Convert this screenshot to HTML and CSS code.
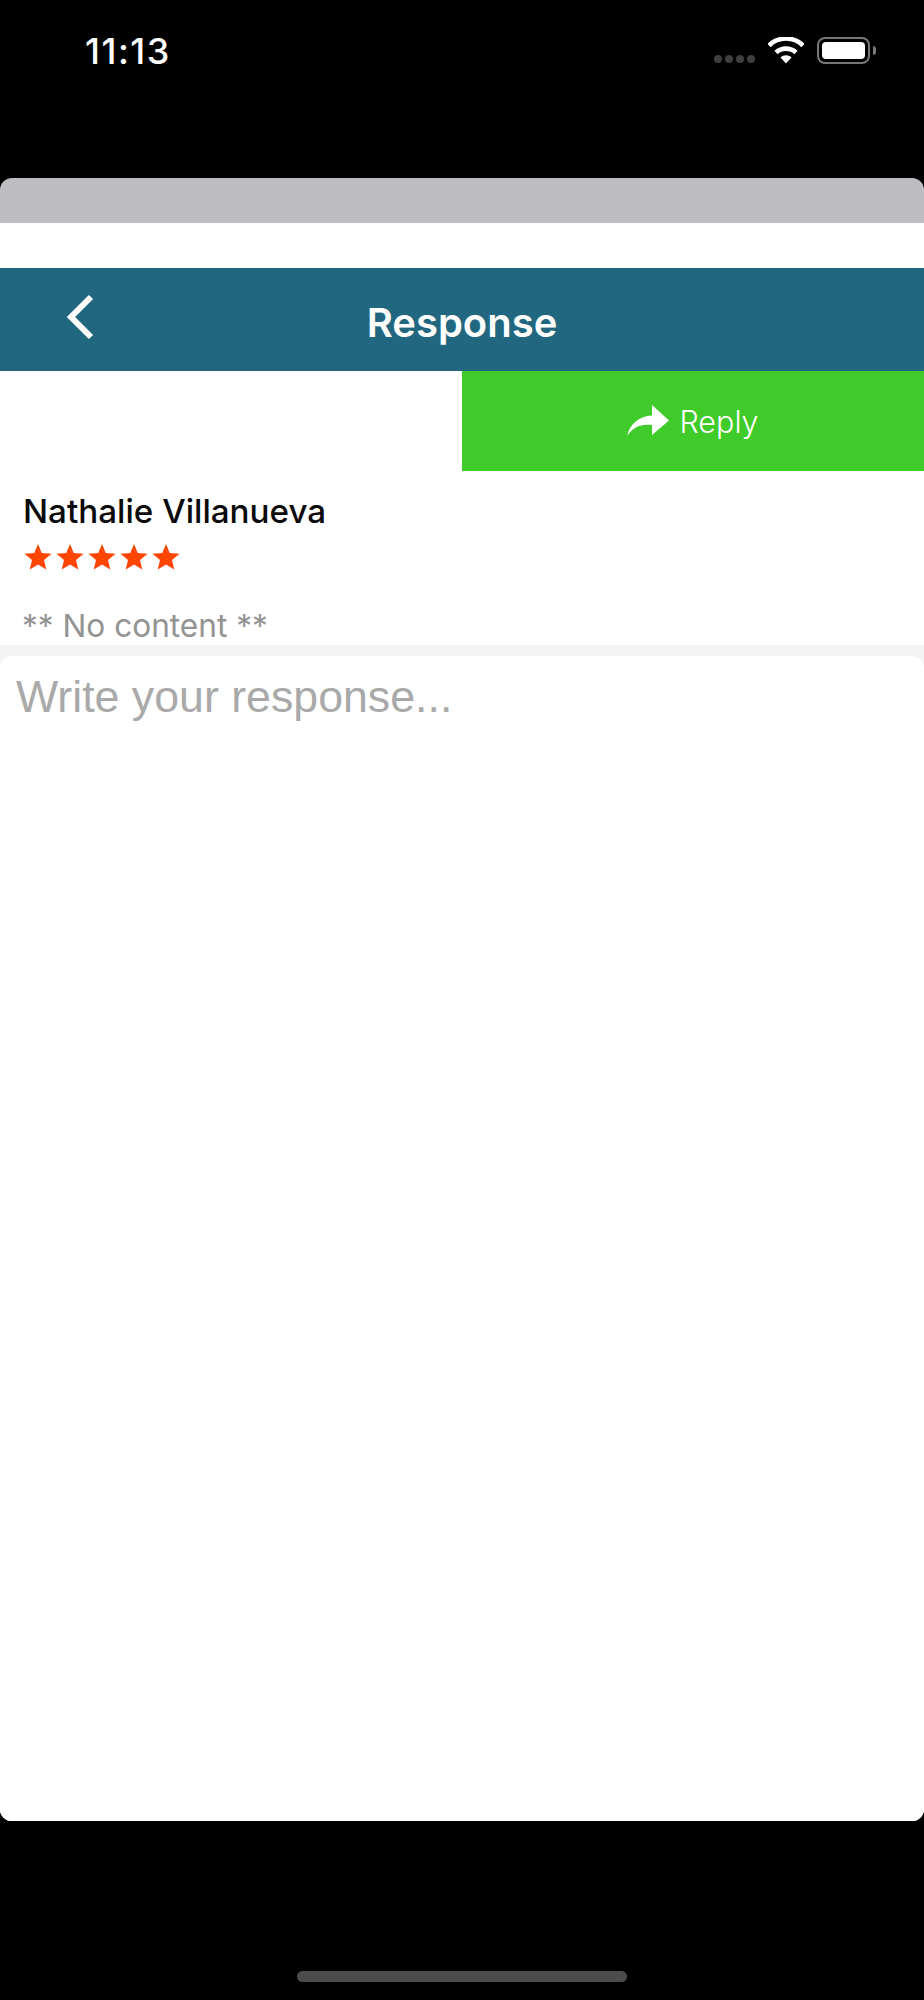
FILE: index.html
```html
<!DOCTYPE html>
<html lang="en">
<head>
    <meta charset="UTF-8">
    <meta name="viewport" content="width=device-width, initial-scale=1.0">
    <title>Response</title>
    <link rel="stylesheet" href="styles.css">
</head>
<body>

    <!-- Status bar -->
    <div class="status-bar">
        <span class="time">11:13</span>
        <div class="status-icons">
            <div class="signal"><i></i><i></i><i></i><i></i></div>
            <svg class="wifi" width="36" height="27" viewBox="0 0 36 27">
                <path d="M1 8.500C10.500 -0.800 25.500 -0.800 35 8.500" fill="none" stroke="#fff" stroke-width="4.600"/>
                <path d="M8 15.500C13.500 10.300 22.500 10.300 28 15.500" fill="none" stroke="#fff" stroke-width="4.600"/>
                <path d="M12.500 20.500C15.500 17.500 20.500 17.500 23.500 20.500L18 26.500Z" fill="#fff"/>
            </svg>
            <div class="battery"><div class="battery-fill"></div></div>
            <div class="battery-cap"></div>
        </div>
    </div>

    <div class="sheet-top"></div>

    <div class="screen">
        <div class="white-gap"></div>

        <!-- Header -->
        <div class="header">
            <svg class="back" width="28" height="46" viewBox="0 0 28 46">
                <path d="M25 3L5 23L25 43" fill="none" stroke="#fff" stroke-width="6"/>
            </svg>
            <h1>Response</h1>
        </div>

        <!-- Reply button -->
        <div class="action-row">
            <button class="reply">
                <svg width="42" height="32" viewBox="0 0 42 32">
                    <path d="M0 31C3 19 12 11 25 10.500L25 0L42 15.500L25 30L25 20C14 18.500 6 22 0 31Z" fill="#fff"/>
                </svg>
                Reply
            </button>
        </div>

        <!-- Review -->
        <div class="review">
            <div class="name">Nathalie Villanueva</div>
            <div class="stars">
                <svg width="28" height="28" viewBox="0 0 28 28"><path class="star" d="M14 1L17.700 10L27.500 10.700L20 17L22.300 26.500L14 21.400L5.700 26.500L8 17L0.500 10.700L10.300 10Z"/></svg>
                <svg width="28" height="28" viewBox="0 0 28 28"><path class="star" d="M14 1L17.700 10L27.500 10.700L20 17L22.300 26.500L14 21.400L5.700 26.500L8 17L0.500 10.700L10.300 10Z"/></svg>
                <svg width="28" height="28" viewBox="0 0 28 28"><path class="star" d="M14 1L17.700 10L27.500 10.700L20 17L22.300 26.500L14 21.400L5.700 26.500L8 17L0.500 10.700L10.300 10Z"/></svg>
                <svg width="28" height="28" viewBox="0 0 28 28"><path class="star" d="M14 1L17.700 10L27.500 10.700L20 17L22.300 26.500L14 21.400L5.700 26.500L8 17L0.500 10.700L10.300 10Z"/></svg>
                <svg width="28" height="28" viewBox="0 0 28 28"><path class="star" d="M14 1L17.700 10L27.500 10.700L20 17L22.300 26.500L14 21.400L5.700 26.500L8 17L0.500 10.700L10.300 10Z"/></svg>
            </div>
            <div class="no-content">** No content **</div>
        </div>

        <!-- Response input -->
        <div class="input-wrap">
            <div class="input-card">Write your response...</div>
        </div>
    </div>

    <!-- Home indicator -->
    <div class="home-area">
        <div class="home-bar"></div>
    </div>

</body>
</html>
```

FILE: styles.css
```css
html, body {
    margin: 0;
    padding: 0;
}

body {
    width: 924px;
    height: 2000px;
    background-color: #000;
    font-family: Inter, "Noto Sans", sans-serif;
    overflow: hidden;
}

/* Status bar */
.status-bar {
    height: 178px;
    display: flex;
    justify-content: space-between;
    align-items: flex-start;
    box-sizing: border-box;
    padding: 0 48px 0 85px;
}

.time {
    margin-top: 30px;
    color: #fff;
    font-size: 36px;
    line-height: 42px;
    font-weight: 500;
    letter-spacing: 1.500px;
}

.status-icons {
    display: flex;
    align-items: center;
    margin-top: 37px;
}

.signal {
    display: flex;
    gap: 3px;
    margin: 17px 13px 0 0;
}

.signal i {
    width: 8px;
    height: 8px;
    border-radius: 50%;
    background-color: #3f3f3f;
}

.wifi {
    margin-right: 13px;
}

.battery {
    width: 53px;
    height: 27px;
    box-sizing: border-box;
    border: 2px solid #777;
    border-radius: 8px;
    padding: 3px;
}

.battery-fill {
    height: 100%;
    background-color: #fff;
    border-radius: 4px;
}

.battery-cap {
    width: 3px;
    height: 9px;
    margin-left: 3px;
    background-color: #777;
    border-radius: 0 3px 3px 0;
}

/* Sheet behind the screen */
.sheet-top {
    height: 45px;
    background-color: #bebdc2;
    border-radius: 12px 12px 0 0;
}

.screen {
    height: 1598px;
    display: flex;
    flex-direction: column;
    background-color: #fff;
    border-radius: 0 0 12px 12px;
    overflow: hidden;
}

.white-gap {
    height: 45px;
    flex: none;
}

/* Header */
.header {
    height: 103px;
    flex: none;
    display: flex;
    align-items: center;
    justify-content: center;
    position: relative;
    box-sizing: border-box;
    padding-top: 6px;
    background-color: #226780;
}

.header h1 {
    margin: 0;
    color: #fff;
    font-size: 40px;
    font-weight: 600;
}

.back {
    position: absolute;
    left: 66px;
    top: 26px;
}

/* Reply */
.action-row {
    display: flex;
    justify-content: flex-end;
    flex: none;
}

.reply {
    width: 462px;
    height: 100px;
    display: flex;
    align-items: center;
    justify-content: center;
    gap: 10px;
    border: none;
    background-color: #3fcb29;
    color: #fff;
    font-family: Inter, sans-serif;
    font-size: 30.500px;
    font-weight: 300;
}

/* Review */
.review {
    height: 174px;
    flex: none;
    box-sizing: border-box;
    padding: 20px 24px 0;
}

.name {
    margin-left: -1px;
    color: #0a0a0a;
    font-size: 33.200px;
    line-height: 40px;
    font-weight: 500;
}

.stars {
    display: flex;
    gap: 4px;
    margin-top: 10px;
    height: 32px;
    align-items: center;
}

.star {
    fill: #ff4500;
}

.no-content {
    margin: 34px 0 0 -2px;
    color: #939393;
    font-size: 31.600px;
    line-height: 38px;
}

/* Input */
.input-wrap {
    flex: 1;
    display: flex;
    padding-top: 11px;
    background-color: #f3f3f3;
}

.input-card {
    flex: 1;
    box-sizing: border-box;
    padding: 16px 16px;
    background-color: #fff;
    border-radius: 12px 12px 0 0;
    color: #a9a9a9;
    font-family: "Liberation Sans", Arial, sans-serif;
    font-size: 44.700px;
    line-height: 50px;
}

/* Home indicator */
.home-area {
    display: flex;
    justify-content: center;
    padding-top: 150px;
}

.home-bar {
    width: 330px;
    height: 11px;
    border-radius: 6px;
    background-color: #4c4c4c;
}
```
